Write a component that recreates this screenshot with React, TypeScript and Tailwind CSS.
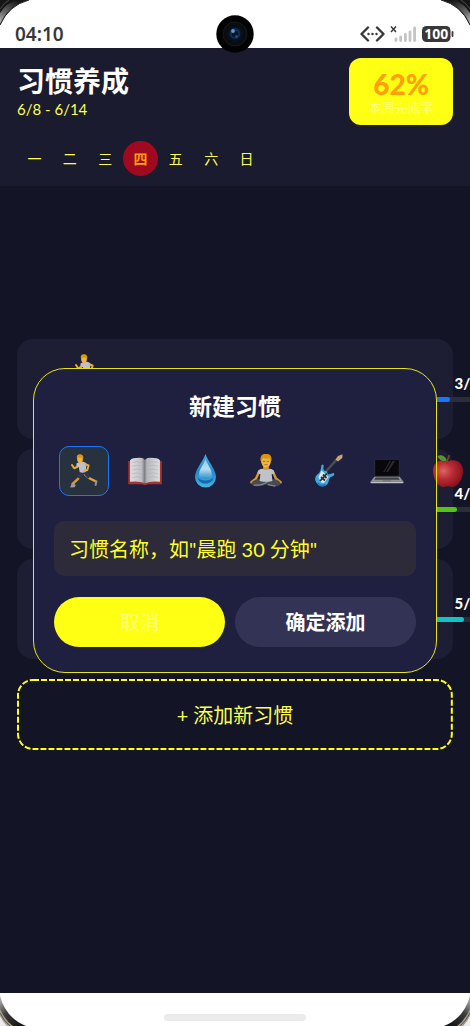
import React from 'react';

const days = ['一', '二', '三', '四', '五', '六', '日'];

function Runner() {
  return (
    <svg viewBox="0 0 36 36" className="size-9" aria-hidden="true">
      <path d="M15 20.500l-3 5.500-5.500 5" fill="none" stroke="#d99a2b" strokeWidth="2.400" strokeLinecap="round" />
      <path d="M18 20.500l5 4.500 7 3.500" fill="none" stroke="#e0a535" strokeWidth="2.400" strokeLinecap="round" />
      <path d="M14 17.500l-2.500 7 2.600 1.300 4-4.500 4 4.500 2.300-2.400-4.600-6.400z" fill="#33354a" />
      <path d="M5 32l2-2.500 2.800 2.700-1.300 2-4.300.2z" fill="#9b9ca3" />
      <path d="M29 27.500l2.500.3-1 5-1.800.2z" fill="#8d8e98" />
      <path d="M10.500 10.500c3-2.300 8-2.300 10 0l-.8 8.300c-2 1.300-4.500.9-6 .2l-.9-5-2.600 1z" fill="#bfc0c8" />
      <path d="M19.800 11.500l2.800 1-1.300 4.500-3 1" fill="none" stroke="#e9ad32" strokeWidth="2" strokeLinejoin="round" strokeLinecap="round" />
      <path d="M11 14l-2.800 1.300L6 12" fill="none" stroke="#e9ad32" strokeWidth="2" strokeLinecap="round" strokeLinejoin="round" />
      <ellipse cx="14" cy="5.800" rx="2.900" ry="3.900" fill="#f0b83b" />
      <path d="M10.700 4.700C10.700 1 13.300.8 15.400 1.500c2.500.8 2.200 3.900 1.300 5.400l-1.300-2.500z" fill="#d79613" />
    </svg>
  );
}

function Book() {
  return (
    <svg viewBox="0 0 36 36" className="size-[34px]" aria-hidden="true">
      <defs>
        <linearGradient id="page">
          <stop offset="0" stopColor="#dedee0" /><stop offset=".38" stopColor="#bfc0c5" />
          <stop offset=".49" stopColor="#7d7e84" /><stop offset=".56" stopColor="#b4b5ba" />
          <stop offset="1" stopColor="#dfdfe2" />
        </linearGradient>
      </defs>
      <path d="M.3 7.500h3v-1h29.500v1h3v24.500H21q-3 1.800-6 0H.3z" fill="#a9332d" />
      <path d="M2.200 6.500Q5 3.500 15.500 4.200L18 6l2.500-1.800Q31 3.500 33.800 6.500v23Q25 28 18 31 11 28 2.200 29.500z" fill="url(#page)" />
      <path d="M4 9q6-2 11 0M4 13q6-2 11 0M4 17q6-2 11 0M4 21q6-2 11 0M21 9q5-2 11 0M21 13q5-2 11 0M21 17q5-2 11 0M21 21q5-2 11 0M4 25q7-2 11 0M21 25q5-2 11 0" fill="none" stroke="#adaeb4" strokeWidth=".6" />
    </svg>
  );
}

function Drop() {
  return (
    <svg viewBox="0 0 36 36" className="size-9" aria-hidden="true">
      <defs>
        <linearGradient id="water" x2="0" y2="1">
          <stop offset="0" stopColor="#4aa9dc" /><stop offset=".55" stopColor="#238bcf" />
          <stop offset="1" stopColor="#45b5df" />
        </linearGradient>
        <linearGradient id="gloss" x2="0" y2="1">
          <stop offset="0" stopColor="#8fcbea" /><stop offset=".5" stopColor="#b8deef" />
          <stop offset="1" stopColor="#2c8fcc" />
        </linearGradient>
      </defs>
      <path d="M18.500 1C16 8.500 8 16.500 8 24a10.500 10.500 0 0 0 21 0C29 16.500 21 8.500 18.500 1z" fill="url(#water)" />
      <path d="M18.500 6c-2 6-6.500 10.500-6.500 16 0 3 3 4 6.500 4s6.500-1 6.500-4c0-5.500-4.500-10-6.500-16z" fill="url(#gloss)" />
      <path d="M10.500 24.500c1.500 8 14.500 8 16 0-3.500 4-12.500 4-16 0z" fill="#1769ab" />
    </svg>
  );
}

function Yoga() {
  return (
    <svg viewBox="0 0 36 36" className="size-[34px]" aria-hidden="true">
      <path d="M11 18L7.500 26l-5 4M25 18l3.500 8 5 4" fill="none" stroke="#d69a30" strokeWidth="2.600" strokeLinecap="round" strokeLinejoin="round" />
      <path d="M10 26.500c-5 1-8 3-7 5.500 1 3 8 2.500 15 .2 7 2.300 14 2.800 15-.2 1-2.500-2-4.500-7-5.500l-8 2z" fill="#484a52" />
      <path d="M5 33q9 .5 15-4M20 32.500l8 1.500" fill="none" stroke="#85878c" strokeWidth="1.300" />
      <path d="M15 12h6v6h-6z" fill="#d89925" />
      <path d="M14.500 15.500q-5 0-5.500 5l3 1-.8 7q6.800 2 13.600 0l-.8-7 3-1q-.5-5-5.500-5-3.500 3-7 0z" fill="#c1c2c9" />
      <ellipse cx="18" cy="7.500" rx="5.200" ry="6.800" fill="#eeb63b" />
      <path d="M12 8C11.200 2-.1 13.700-.1 18-.1S24.800 2 24 8l-1.700-3.500q-4.300 1-7-.5z" fill="none" />
      <path d="M12.200 7.500C11.500 2 14-.3 18-.3s6.500 2.300 5.800 7.800l-1.500-3q-4.300 1-7-.5z" fill="#d9940e" />
      <path d="M14.800 7.800h2.400M18.800 7.800h2.400M16.500 11.300h3" stroke="#8b571b" strokeWidth=".8" />
    </svg>
  );
}

function Guitar() {
  return (
    <svg viewBox="0 0 36 36" className="size-9" aria-hidden="true">
      <path d="M13 23L28 6" stroke="#4d4a52" strokeWidth="2.600" />
      <path d="M26.500 6.500l2.500-3.500 4.500-1.800-.2 3.800-4.300 3.500z" fill="#c9a575" />
      <path d="M12.500 12c2-1.500 2.500 0 2 2-.5 3 .5 4.500 3 4 1.500 2 1 3.500 2 3.500l5-1.500c2 .5.500 3.500-3 4-2 1.500-1 4.500-3.500 7.500-3.500 3.500-9 2-11-2.500-2-4 0-6.500 2.500-8.500 2.500-2 2.500-6.500 3-8.500z" fill="#3caadc" />
      <path d="M12.500 17.500l7 6.500-4.500 6-3-.5-2.500-5.500z" fill="#dfe8ec" />
      <path d="M11 28l7-7.500M12 24l4 3.500M14 21.500l3.500 3.500" stroke="#2e3037" strokeWidth="1.800" />
      <path d="M8.500 30q4 4 8 1.500" fill="none" stroke="#2176bd" strokeWidth="1.500" />
    </svg>
  );
}

function Laptop() {
  return (
    <svg viewBox="0 0 36 36" className="size-[34px]" aria-hidden="true">
      <path d="M4.500 6q0-.8 1-.8h25q1 0 1 .8v18h-27z" fill="#2c2c31" />
      <path d="M5.500 6.200h25V23h-25z" fill="#08080c" />
      <path d="M17 19l7-11.500h2.500L19 19zM14 19l7-11.500h1.300L15.200 19z" fill="#2c2c32" />
      <path d="M4.500 24h27l4 5.500H.5z" fill="#8f9095" />
      <path d="M6 24.800h24l1.500 2.500h-27z" fill="#3f4046" />
      <path d="M.5 29.500h35v1q-1 .6-2 .6h-31q-1 0-2-.6z" fill="#c2c2c5" />
      <path d="M14 27.800h8l.7 1.400h-9.400z" fill="#73747a" />
    </svg>
  );
}

function Apple() {
  return (
    <svg viewBox="0 0 36 36" className="size-9" aria-hidden="true">
      <defs>
        <radialGradient id="skin" cx=".35" cy=".4" r=".7">
          <stop offset="0" stopColor="#d96664" /><stop offset=".45" stopColor="#bb2a32" />
          <stop offset="1" stopColor="#7d101d" />
        </radialGradient>
      </defs>
      <path d="M18 8.500C11 5 3 9 3 17.500 3 26 8 34 13.500 34c2 0 3-.7 4.500-.7s2.500.7 4.500.7C28 34 33 26 33 17.500 33 9 25 5 18 8.500z" fill="url(#skin)" />
      <path d="M17.500 11Q17 6 19.500 2" fill="none" stroke="#754427" strokeWidth="1.600" />
      <path d="M17 7.500C15 2 10 1.500 7.500 3c1.500 4 5 6 9.500 4.500z" fill="#57962f" />
    </svg>
  );
}

const icons = [
  { label: '跑步', Icon: Runner },
  { label: '阅读', Icon: Book },
  { label: '喝水', Icon: Drop },
  { label: '冥想', Icon: Yoga },
  { label: '吉他', Icon: Guitar },
  { label: '电脑', Icon: Laptop },
  { label: '苹果', Icon: Apple },
];

const habits = [
  { done: 3, Icon: Runner, color: 'bg-[#1a75ff]' },
  { done: 4, Icon: Book, color: 'bg-[#52c41a]' },
  { done: 5, Icon: Drop, color: 'bg-[#13c2c2]' },
];

function StatusBar() {
  return (
    <div className="flex h-12 shrink-0 items-end justify-between bg-white pr-4 pb-1 pl-[15px] text-[#38383a]">
      <time className="font-['Noto_Sans'] text-[19px] leading-5 font-semibold">04:10</time>
      <svg viewBox="0 0 94 20" className="h-5 w-[94px]" role="img" aria-label="信号与电量">
        <path d="M8 3.500L1.500 10 8 16.500M17 3.500l6.500 6.500-6.500 6.500" fill="none" stroke="currentColor" strokeWidth="2.400" strokeLinecap="round" strokeLinejoin="round" />
        <path d="M8.500 10h.01M12.500 10h.01M16.500 10h.01" stroke="currentColor" strokeWidth="2.400" strokeLinecap="round" />
        <path d="M31 2.500l5 5.500m0-5.500L31 8" stroke="currentColor" strokeWidth="1.500" />
        <path d="M36 15v1.500M40.700 13v3.500M45.400 10.500v6M50 8v8.500M54.600 4v12.500" stroke="#c4c4c4" strokeWidth="2.800" strokeLinecap="round" />
        <rect x="62" y="2" width="28.500" height="16" rx="4.500" fill="currentColor" />
        <path d="M92.500 8v4" stroke="currentColor" strokeWidth="1.800" strokeLinecap="round" />
        <text x="76.300" y="15" textAnchor="middle" fill="#fff" className="font-['Noto_Sans'] text-[14px] font-bold">100</text>
      </svg>
    </div>
  );
}

function Camera() {
  return (
    <svg viewBox="0 0 38 38" className="absolute top-[15px] left-1/2 z-20 size-[38px] -translate-x-1/2" aria-hidden="true">
      <circle cx="19" cy="19" r="18.700" fill="#020203" />
      <circle cx="19" cy="19" r="12" fill="#0b0c0f" stroke="#17191c" />
      <circle cx="19" cy="19" r="8" fill="#07111d" />
      <circle cx="19" cy="18.500" r="5.500" fill="#0d2c4c" />
      <circle cx="19" cy="19" r="3" fill="#061424" />
      <circle cx="17" cy="16" r="1.900" fill="#5d9bd0" />
      <circle cx="20.500" cy="21.500" r="1.200" fill="#285b8e" />
    </svg>
  );
}

function TopCorner({ place }: { place: string }) {
  return (
    <svg viewBox="0 0 30 26" className={'pointer-events-none absolute z-20 h-[26px] w-[30px] ' + place} aria-hidden="true">
      <defs>
        <linearGradient id="bezel" x1="0" y1="1" x2=".6" y2="0">
          <stop offset="0" stopColor="#bdbdbd" /><stop offset=".4" stopColor="#6c6c6c" />
          <stop offset="1" stopColor="#161616" />
        </linearGradient>
      </defs>
      <path d="M0 0h29Q9 5 0 25z" fill="#161616" />
      <path d="M0 13Q6 3 17 0h10Q9 5 0 24z" fill="url(#bezel)" />
      <path d="M29 0Q9 5 0 25" fill="none" stroke="#222" strokeWidth="1" />
      <path d="M0 9Q4 3 9 0" fill="none" stroke="#4a4a4a" strokeWidth="1" />
    </svg>
  );
}

function BottomCorner({ place }: { place: string }) {
  return (
    <svg viewBox="0 0 28 32" className={'pointer-events-none absolute z-20 h-8 w-7 ' + place} aria-hidden="true">
      <defs>
        <linearGradient id="rim" x2=".7" y2="1">
          <stop offset=".1" stopColor="#a5a5a5" /><stop offset=".5" stopColor="#3c3c3c" />
          <stop offset="1" stopColor="#151515" />
        </linearGradient>
      </defs>
      <path d="M0 2Q6 24 26 32H0z" fill="url(#rim)" />
      <path d="M0 15Q5 26 13 32H0z" fill="#a39b8d" />
      <path d="M0 19Q4 27 10 32" fill="none" stroke="#5e574b" strokeWidth="1" />
      <path d="M0 22Q3 28 7 32H0z" fill="#ececec" />
    </svg>
  );
}

export default function App() {
  return (
    <div className="relative flex min-h-screen flex-col overflow-hidden bg-[#131426] font-['Lato','Noto_Sans_CJK_SC',sans-serif]">
      <StatusBar />
      <Camera />
      <TopCorner place="top-0 left-0" />
      <TopCorner place="top-0 right-0 -scale-x-100" />
      <BottomCorner place="bottom-0 left-0" />
      <BottomCorner place="right-0 bottom-0 -scale-x-100" />

      <div className="relative flex flex-1 flex-col">
        <header className="bg-[#1a1b2e] px-[17px] pt-[10px] pb-[10px]">
          <div className="flex items-start justify-between">
            <div className="pt-1">
              <h1 className="text-[28px] leading-[38px] font-bold text-white">习惯养成</h1>
              <p className="text-[15px] leading-[18px] text-[#ffff50]">6/8 - 6/14</p>
            </div>
            <div className="flex h-[67px] w-[104px] flex-col items-center rounded-xl bg-[#ffff14] pt-[10px]">
              <strong className="text-[28px] leading-8 font-black text-[#ff9f0a]">62%</strong>
              <span className="text-[13px] leading-[14px] text-[#ffff70]">本周完成率</span>
            </div>
          </div>
          <div className="mt-4 flex w-[247px] justify-between">
            {days.map((day, i) => (
              <button
                key={day}
                type="button"
                className={i === 3
                  ? 'size-[35px] rounded-full bg-[#9f0a20] text-[14px] font-bold text-[#ff9f0a]'
                  : 'size-[35px] rounded-full text-[14px] text-[#ffff50]'}
              >
                {day}
              </button>
            ))}
          </div>
        </header>

        <main className="flex flex-1 flex-col px-[17px] pt-[153px]">
          <div className="flex flex-col gap-[10px]">
            {habits.map(({ done, Icon, color }) => (
              <article key={done} className="flex h-[100px] items-start rounded-2xl bg-[#1d1e33] pt-[14px] pl-[53px]">
                <div className="shrink-0"><Icon /></div>
                <div className="ml-auto -mr-[26px] w-[51px] shrink-0 pt-5">
                  <p className="text-right text-[15px] leading-5 font-black text-white">{done}/7</p>
                  <div className="mt-1 h-[5px] rounded-full bg-[#2d2c3b]">
                    <div className={'h-full rounded-full ' + color} style={{ width: `${(done / 7) * 100}%` }} />
                  </div>
                </div>
              </article>
            ))}
          </div>
          <button type="button" className="relative mt-5 h-[71px] text-[20px] text-[#ffff50]">
            <svg className="absolute inset-0 size-full overflow-visible" aria-hidden="true">
              <rect x="1" y="1" width="99.500%" height="69" rx="15" fill="none" stroke="#ffff14" strokeWidth="2" strokeDasharray="6 2" />
            </svg>
            + 添加新习惯
          </button>
        </main>

        <div className="absolute inset-0 flex items-center px-[33px]">
          <section role="dialog" aria-labelledby="dialog-title" className="relative w-full rounded-[32px] bg-[#1f1f40] px-[21px] pt-[22px] pb-[26px]">
            <h2 id="dialog-title" className="text-center text-[23px] leading-8 font-bold text-white">新建习惯</h2>
            <div className="mt-6 ml-[5px] flex w-[414px] justify-between">
              {icons.map(({ label, Icon }, i) => (
                <button
                  key={label}
                  type="button"
                  aria-label={label}
                  className={i === 0
                    ? 'flex size-[50px] items-center justify-center rounded-[10px] border border-[#1a75ff] bg-[#27323e]'
                    : 'flex size-[50px] items-center justify-center'}
                >
                  <Icon />
                </button>
              ))}
            </div>
            <input
              type="text"
              aria-label="习惯名称"
              placeholder={'习惯名称，如"晨跑 30 分钟"'}
              className="mt-[25px] block h-[55px] w-full rounded-[10px] bg-[#2d2b3a] px-[15px] text-[20px] text-white outline-none placeholder:text-[#ffff28]"
            />
            <div className="mt-[21px] flex gap-[10px] text-[20px]">
              <button type="button" className="h-[50px] flex-[17] rounded-full bg-[#ffff14] text-[#ffff70]">取消</button>
              <button type="button" className="h-[50px] flex-[18] rounded-full bg-[#333355] font-bold text-white">确定添加</button>
            </div>
            <div className="pointer-events-none absolute inset-0 rounded-[32px] border border-[#e5e51c]" />
          </section>
        </div>
      </div>

      <footer className="flex h-[33px] shrink-0 justify-center bg-white pt-[21px]">
        <div className="h-[7px] w-[142px] rounded-full bg-[#ebebeb]" />
      </footer>
    </div>
  );
}
